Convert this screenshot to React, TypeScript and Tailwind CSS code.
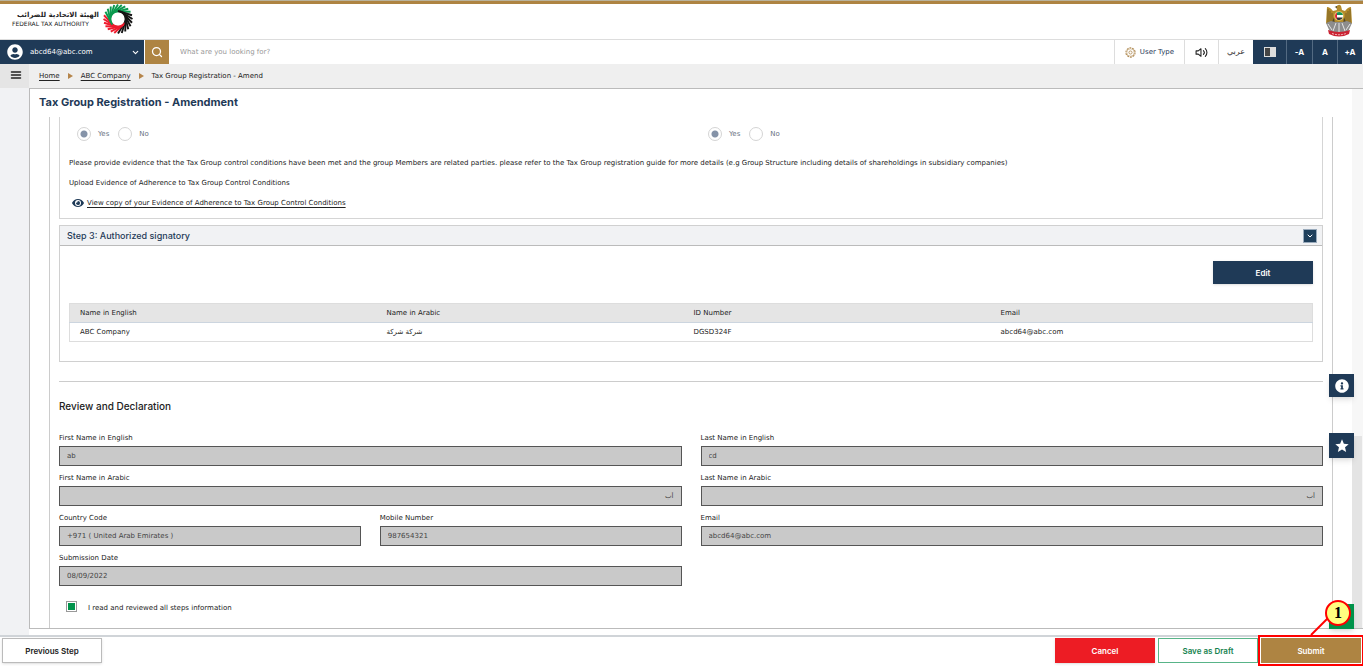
import { FaEye, FaInfoCircle, FaUserCircle } from 'react-icons/fa'
import { FiChevronDown, FiSearch, FiMenu, FiVolume2 } from 'react-icons/fi'
import { MdStar } from 'react-icons/md'

const swirl = Array.from({ length: 24 }, (_, i) => {
  const deg = i * 15
  const a = (deg * Math.PI) / 180
  const b = ((deg + 75) * Math.PI) / 180
  const mid = (deg + 55) % 360
  const color = mid > 185 && mid < 320 ? '#0b9a4f' : mid >= 85 && mid <= 185 ? '#ee1c2e' : '#151515'
  return {
    color,
    x1: 15 + 8 * Math.cos(a),
    y1: 15 + 8 * Math.sin(a),
    x2: 15 + 14.5 * Math.cos(b),
    y2: 15 + 14.5 * Math.sin(b),
  }
})

const TaxLogo = () => (
  <svg viewBox="0 0 30 30" className="h-[30px] w-[30px]" aria-hidden="true">
    {swirl.map((s, i) => (
      <line key={i} x1={s.x1} y1={s.y1} x2={s.x2} y2={s.y2} stroke={s.color} strokeWidth="1.9" />
    ))}
  </svg>
)

const Emblem = () => (
  <svg viewBox="0 0 26 33" className="h-[33px] w-[26px]" aria-hidden="true">
    <path d="M10 3Q13-1 15 2L16 6 19 7Q22 3 25 3L26 19 21 24 5 24 0 19 1 3Q4 3 7 7L11 6Z" fill="#b28a2c" />
    <path d="M2 5V19M4 7V21M6 9V22M24 5V19M22 7V21M20 9V22" stroke="#61501f" strokeWidth=".7" />
    <path d="M11 2L8.500 3 11 4ZM8 13L4 24 9 21ZM18 13L22 24 17 21Z" fill="#504526" />
    <path d="M0 19L5 17 9 18H17L21 17 26 19 22 28H4Z" fill="#8d8d8d" />
    <path d="M10 19L7 27M13 19V28M16 19L19 27M2 20L6 26M24 20L20 26" stroke="#e5e5e5" strokeWidth="1" />
    <circle cx="13" cy="12" r="5" fill="#d6b64d" />
    <circle cx="13" cy="12" r="4" fill="#fff" />
    <path d="M11 8.500A4 4 0 0 1 17 11H11Z" fill="#139355" />
    <path d="M11 8.500A4 4 0 0 0 11 15.500Z" fill="#dc2636" />
    <path d="M11 13.500H16.700A4 4 0 0 1 11 15.500Z" fill="#333" />
    <path d="M2 26Q13 30 24 26L23 30Q13 35 3 30Z" fill="#cb2333" />
    <path d="M6 29.500Q13 32 20 29.500" fill="none" stroke="#f3b6ba" strokeWidth="1" strokeDasharray="2 1" />
  </svg>
)

const UserTypeIcon = () => (
  <svg viewBox="0 0 12 12" className="h-[11px] w-[11px]" fill="none" stroke="#b08a52" aria-hidden="true">
    <circle cx="6" cy="6" r="5" strokeDasharray="2.200 .9" strokeWidth="1.200" />
    <circle cx="6" cy="6" r="4" strokeWidth=".5" />
    <circle cx="6" cy="6" r="1.700" strokeWidth=".9" />
  </svg>
)

const Arrow = () => (
  <svg viewBox="0 0 5 6" className="h-[6px] w-[5px]" aria-hidden="true">
    <path d="M0 0L5 3 0 6Z" fill="#b5854b" />
  </svg>
)

const YesNo = ({ name }: { name: string }) => (
  <div className="flex items-center text-gray-500">
    {['Yes', 'No'].map((option) => (
      <label key={option} className="mr-[9px] flex items-center gap-[7px]">
        <input
          type="radio"
          name={name}
          disabled
          defaultChecked={option === 'Yes'}
          className="h-[14px] w-[14px] appearance-none rounded-full border border-[#d4d4d4] bg-white checked:bg-[radial-gradient(circle,#8593a8_3px,#fff_4px)]"
        />
        {option}
      </label>
    ))}
  </div>
)

type FieldProps = { id: string; label: string; value: string; rtl?: boolean; className?: string }

const Field = ({ id, label, value, rtl, className = '' }: FieldProps) => (
  <div className={className}>
    <label htmlFor={id} className="block h-[13px] leading-[10px] text-[#222]">{label}</label>
    <input
      id={id}
      readOnly
      value={value}
      dir={rtl ? 'rtl' : 'ltr'}
      className="block h-5 w-full border border-[#555] bg-[#c9c9c9] px-[7px] text-[#444] outline-none"
    />
  </div>
)

const columns = ['Name in English', 'Name in Arabic', 'ID Number', 'Email']
const rows = [['ABC Company', 'شركة شركة', 'DGSD324F', 'abcd64@abc.com']]

const Header = () => (
  <header>
    <div className="h-1 border-t border-[#b9b39c] bg-[#ae8442]" />
    <div className="flex h-[35px] items-start justify-between pr-[11px] pl-3">
      <div className="flex items-center gap-1">
        <div className="w-[87px] text-[#222]">
          <div dir="rtl" className="leading-[9px] font-bold whitespace-nowrap">الهيئة الاتحادية للضرائب</div>
          <div className="text-[6px] leading-[7px] whitespace-nowrap">FEDERAL TAX AUTHORITY</div>
        </div>
        <TaxLogo />
      </div>
      <Emblem />
    </div>
    <div className="flex h-[25px] border-t border-[#ddd]">
      <button className="flex w-36 items-center bg-[#1f3a57] px-[7px] text-white">
        <FaUserCircle className="mr-[7px] size-4" />
        abcd64@abc.com
        <FiChevronDown className="-mr-[3px] ml-auto size-[9px] stroke-[3]" />
      </button>
      <button aria-label="Search" className="ml-px flex w-6 items-center justify-center bg-[#ae8442] text-white">
        <FiSearch className="size-3 stroke-[2.5]" />
      </button>
      <input
        aria-label="Search"
        placeholder="What are you looking for?"
        className="min-w-0 flex-1 px-[11px] outline-none placeholder:text-[#999]"
      />
      <button className="flex w-[70px] items-center justify-center gap-1 border-l border-[#ddd] text-[#1f3a57]">
        <UserTypeIcon />
        User Type
      </button>
      <button aria-label="Read aloud" className="flex w-[34px] items-center justify-center border-l border-[#ddd]">
        <FiVolume2 className="size-[13px]" />
      </button>
      <button lang="ar" className="w-[35px] border-l border-[#ddd] text-[8px] text-[#333]">عربي</button>
      <div className="mr-px flex divide-x divide-[#536a82] bg-[#1f3a57] font-['Inter',sans-serif] text-[8px] font-bold text-white">
        <button aria-label="Contrast" className="flex w-[34px] items-center justify-center">
          <span className="h-[10px] w-3 border border-[#ddd] bg-linear-to-r from-[#444] from-50% to-[#ddd] to-50%" />
        </button>
        <button className="w-[26px]">-A</button>
        <button className="w-[25px]">A</button>
        <button className="w-6">+A</button>
      </div>
    </div>
  </header>
)

const Review = () => (
  <section className="mt-[19px] border-t border-[#ccc]">
    <h2 className="mt-4 font-['Inter',sans-serif] text-[10px] leading-4 font-medium text-[#222]">Review and Declaration</h2>
    <div className="mt-[19px] grid grid-cols-4 gap-x-[19px] gap-y-[7px]">
      <Field id="first-en" label="First Name in English" value="ab" className="col-span-2" />
      <Field id="last-en" label="Last Name in English" value="cd" className="col-span-2" />
      <Field id="first-ar" label="First Name in Arabic" value="أب" rtl className="col-span-2" />
      <Field id="last-ar" label="Last Name in Arabic" value="أب" rtl className="col-span-2" />
      <Field id="country" label="Country Code" value="+971 ( United Arab Emirates )" />
      <Field id="mobile" label="Mobile Number" value="987654321" />
      <Field id="email" label="Email" value="abcd64@abc.com" className="col-span-2" />
      <Field id="date" label="Submission Date" value="08/09/2022" className="col-span-2" />
    </div>
    <label className="mt-[15px] ml-[7px] flex gap-[11px] leading-[14px] text-[#222]">
      <input
        type="checkbox"
        defaultChecked
        className="size-[11px] appearance-none border border-[#999] bg-white p-px checked:bg-[#00934b] checked:bg-clip-content"
      />
      I read and reviewed all steps information
    </label>
  </section>
)

const App = () => {
  return (
    <div className="relative flex min-h-screen flex-col bg-white font-['DejaVu_Sans',sans-serif] text-[7px] text-[#222]">
      <Header />
      <div className="flex h-6 items-center bg-[#efefef]">
        <button aria-label="Menu" className="flex h-full w-[29px] justify-center bg-[#e5e5e5] pt-[5px] pl-[3px]">
          <FiMenu className="size-3 stroke-[3]" />
        </button>
        <nav aria-label="Breadcrumb" className="ml-[10px] flex items-center gap-2">
          <a href="#home" className="underline underline-offset-2">Home</a>
          <Arrow />
          <a href="#company" className="underline underline-offset-2">ABC Company</a>
          <Arrow />
          <span>Tax Group Registration - Amend</span>
        </nav>
      </div>

      <div className="flex flex-1">
        <aside className="w-[29px] bg-[#f1f2f4]" />
        <main className="mb-[6px] flex flex-1 flex-col border-t border-b border-l border-[#bbb] pr-[19px]">
          <h1 className="h-7 pt-[5px] pl-[9px] font-['Inter',sans-serif] text-[11px] leading-4 font-bold text-[#1f3a57]">
            Tax Group Registration - Amendment
          </h1>
          <div className="ml-[19px] flex-1 border-x border-[#ccc] px-[9px]">
            <section className="border-x border-b border-[#d5d5d5] px-[9px] pb-[9px]">
              <div className="grid grid-cols-2 gap-x-[26px] pt-[10px] pl-2">
                <YesNo name="control" />
                <YesNo name="related" />
              </div>
              <p className="mt-4 leading-3">
                Please provide evidence that the Tax Group control conditions have been met and the group Members are related parties. please refer to the Tax Group registration guide for more details (e.g Group Structure including details of shareholdings in subsidiary companies)
              </p>
              <p className="mt-2 leading-3">Upload Evidence of Adherence to Tax Group Control Conditions</p>
              <a href="#evidence" className="mt-2 ml-[3px] flex items-center gap-[3px] leading-3 underline underline-offset-2">
                <FaEye className="size-3 text-[#1f3a57]" />
                View copy of your Evidence of Adherence to Tax Group Control Conditions
              </a>
            </section>

            <section className="mt-[6px] border border-[#d0d0d0]">
              <div className="flex h-5 items-center justify-between border-b border-[#bbb] bg-[#f1f2f4] pr-[5px] pl-[7px]">
                <h2 className="font-['Inter',sans-serif] text-[9px] font-medium text-[#1f3a57]">Step 3: Authorized signatory</h2>
                <button aria-label="Collapse step 3" className="flex size-[14px] items-center justify-center border border-[#9ab] bg-[#1f3f5b] text-white">
                  <FiChevronDown className="size-2 stroke-[3]" />
                </button>
              </div>
              <div className="px-[9px] pt-[15px] pb-[19px]">
                <button className="ml-auto block h-[23px] w-[100px] bg-[#1f3a57] font-['Inter',sans-serif] text-[8px] font-semibold text-white shadow">Edit</button>
                <table className="mt-[19px] w-full table-fixed border border-[#ddd] text-left">
                  <thead>
                    <tr className="h-[19px] border-b border-[#ccd5df] bg-[#e5e5e5]">
                      {columns.map((column) => <th key={column} className="w-[24.7%] px-[10px] font-medium last:w-auto">{column}</th>)}
                    </tr>
                  </thead>
                  <tbody>
                    {rows.map((row) => (
                      <tr key={row[2]} className="h-[19px]">
                        {row.map((cell) => <td key={cell} className="px-[10px]">{cell}</td>)}
                      </tr>
                    ))}
                  </tbody>
                </table>
              </div>
            </section>
            <Review />
          </div>
        </main>
        <div className="mb-[6px] flex w-[11px] flex-col border-t border-b border-[#bbb] bg-[#f7f7f7] pr-px">
          <div className="flex-[347]" />
          <div className="flex-[192] bg-[#e4e4e4]" />
        </div>
      </div>

      <footer className="flex h-[31px] items-start gap-[3px] border-t-2 border-[#d0d4d8] px-[2px] pt-px font-['Inter',sans-serif] text-[8px] font-semibold">
        <button className="mr-auto h-[25px] w-[100px] border border-[#bbb] bg-white shadow-sm">Previous Step</button>
        <button className="h-[25px] w-[100px] bg-[#ed1c24] text-white shadow-sm">Cancel</button>
        <button className="h-[25px] w-[100px] border border-[#58b488] bg-white text-[#16834f]">Save as Draft</button>
        <button className="h-[25px] w-[100px] bg-[#ae8442] text-white outline-2 outline-offset-1 outline-[#f00]">Submit</button>
      </footer>

      <button aria-label="Information" className="absolute right-[9px] bottom-[269px] flex h-[23px] w-[25px] items-center justify-center bg-[#1f3a57] text-white shadow-md">
        <FaInfoCircle className="size-[14px]" />
      </button>
      <button aria-label="Favourites" className="absolute right-[9px] bottom-[208px] flex size-[25px] items-center justify-center bg-[#1f3a57] text-white shadow-md">
        <MdStar className="size-4" />
      </button>
      <button aria-label="Chat" className="absolute right-[9px] bottom-[37px] size-[25px] bg-[#00934b] shadow-md" />
      <svg className="absolute right-[26px] bottom-[30px] h-[22px] w-[28px]" viewBox="0 0 28 22" aria-hidden="true">
        <path d="M2 21L22 1" stroke="#f00" strokeWidth="2" />
      </svg>
      <span className="absolute right-3 bottom-10 flex size-[26px] items-center justify-center rounded-full border-2 border-[#f00] bg-[#ffff80] font-['Liberation_Serif',serif] text-base font-bold text-black">1</span>
    </div>
  )
}

export default App
